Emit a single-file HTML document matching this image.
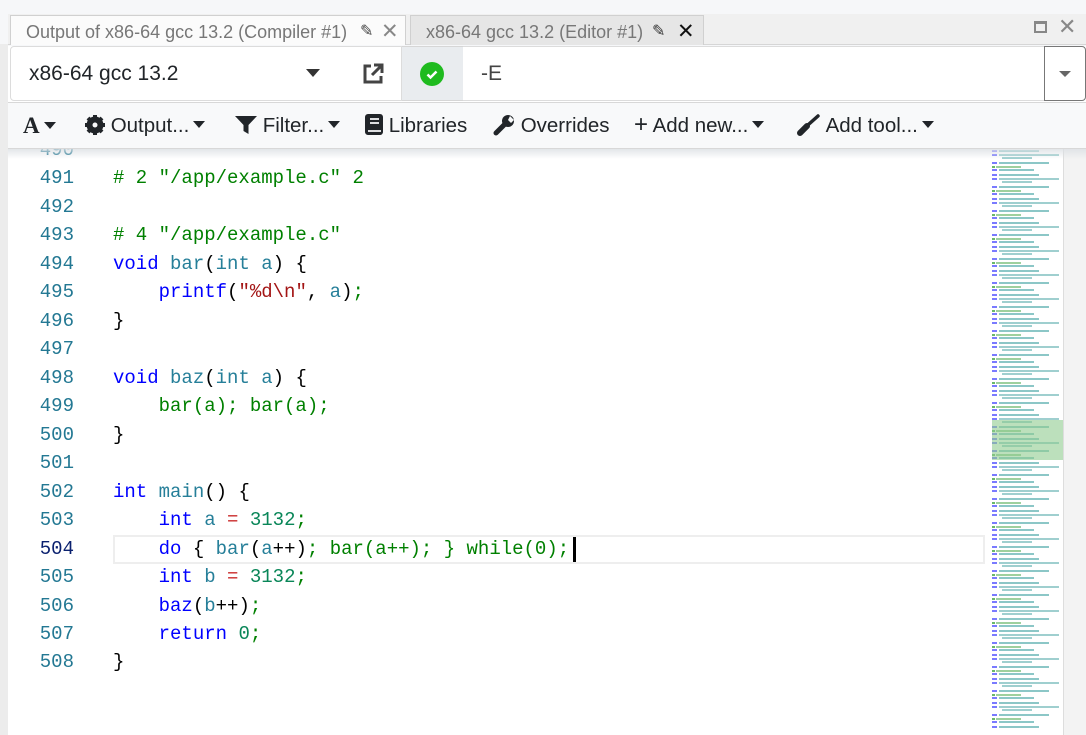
<!DOCTYPE html>
<html><head><meta charset="utf-8"><style>
*{margin:0;padding:0;box-sizing:border-box}
body{width:1086px;height:735px;overflow:hidden;background:#f6f7f9;font-family:"Liberation Sans",sans-serif;position:relative}
.abs{position:absolute}
.tabbar{left:8px;top:14px;width:1078px;height:31px;background:#f0f0f0;border-bottom:1px solid #d6d6d6}
.tab{top:15px;height:30px;font-size:18px;color:#777;white-space:nowrap}
.row{left:8px;top:46px;width:1078px;height:56px;background:#fff}
.tb{left:8px;top:102px;width:1078px;height:47px;background:#f8f9fa;border-top:1px solid #d8d8d8;border-bottom:1px solid #d8d8d8;z-index:2}
.tbi{top:114px;font-size:20.5px;color:#212529;white-space:nowrap;z-index:3}
.caret{display:inline-block;width:0;height:0;border-left:6px solid transparent;border-right:6px solid transparent;border-top:7px solid #212529;vertical-align:middle;margin-left:4px;margin-top:-4px}
.ed{left:8px;top:149px;width:1078px;height:586px;background:#fff}
.code{font-family:"Liberation Mono",monospace;font-size:19px;line-height:28.47px;white-space:pre}
.ln{left:28px;width:46px;text-align:right;color:#237893}
.k{color:#0000ff}.t{color:#267f99}.g{color:#008000}.n{color:#098658}.s{color:#a31515}.r{color:#c92a2a}.b{color:#000}
</style></head><body>
<div class="abs" style="left:0;top:44px;width:8px;height:691px;background:#ececec"></div>
<div class="abs tabbar"></div>
<div class="abs tab" style="left:10px;width:396px;background:#fbfbfb;border:1px solid #d0d0d0;border-bottom:none"></div>
<div class="abs" style="left:26px;top:22px;font-size:18px;color:#777;white-space:nowrap">Output of x86-64 gcc 13.2 (Compiler #1)</div>
<div class="abs" style="left:360px;top:21px;font-size:16px;color:#444">&#9998;</div>
<div class="abs" style="left:381px;top:19px;font-size:21px;color:#888">✕</div>
<div class="abs tab" style="left:410px;width:294px;background:#e6e6e6;border:1px solid #d0d0d0;border-bottom:none"></div>
<div class="abs" style="left:426px;top:22px;font-size:18px;color:#777;white-space:nowrap">x86-64 gcc 13.2 (Editor #1)</div>
<div class="abs" style="left:652px;top:21px;font-size:16px;color:#333">&#9998;</div>
<div class="abs" style="left:677px;top:19px;font-size:21px;color:#111">✕</div>
<div class="abs" style="left:1034px;top:21px;width:13px;height:12px;border:2px solid #888;border-top-width:3px"></div>
<div class="abs" style="left:1058px;top:14px;font-size:22px;color:#888">✕</div>

<div class="abs row"></div>
<div class="abs" style="left:10px;top:46px;width:392px;height:55px;border:1px solid #dcdcdc;border-radius:4px 0 0 4px;background:#fff"></div>
<div class="abs" style="left:29px;top:62px;font-size:21px;color:#212529">x86-64 gcc 13.2</div>
<div class="abs" style="left:306px;top:69px;border-left:7px solid transparent;border-right:7px solid transparent;border-top:8px solid #333"></div>
<svg class="abs" style="left:361px;top:62px" width="24" height="24" viewBox="0 0 24 24"><path d="M10 4H4v16h16v-6" fill="none" stroke="#444" stroke-width="3"/><path d="M13 3h8v8M21 3L11 13" fill="none" stroke="#444" stroke-width="3"/></svg>
<div class="abs" style="left:402px;top:46px;width:61px;height:55px;background:#e9ecef;border-top:1px solid #d6d6d6;border-bottom:1px solid #d6d6d6"></div>
<div class="abs" style="left:420px;top:62px;width:24px;height:24px;border-radius:50%;background:#1fbb1f"></div>
<svg class="abs" style="left:420px;top:62px" width="24" height="24"><path d="M7.5 12.5l3 3 6-6" fill="none" stroke="#fff" stroke-width="2.5"/></svg>
<div class="abs" style="left:463px;top:46px;width:581px;height:55px;border-top:1px solid #dcdcdc;border-bottom:1px solid #dcdcdc;background:#fff"></div>
<div class="abs" style="left:481px;top:62px;font-size:21px;color:#444">-E</div>
<div class="abs" style="left:1044px;top:46px;width:42px;height:55px;border:1px solid #777;border-radius:0 4px 4px 0;background:#fff"></div>
<div class="abs" style="left:1059px;top:71px;border-left:6px solid transparent;border-right:6px solid transparent;border-top:6px solid #666"></div>

<div class="abs ed"></div>
<div class="abs" style="left:113px;top:535px;width:872px;height:29px;border:2px solid #eee"></div>
<div class="abs" style="left:573px;top:537px;width:3px;height:25px;background:#000"></div>
<div class="abs code ln" style="top:136px">490
491
492
493
494
495
496
497
498
499
500
501
502
503
<span style="color:#0b216f">504</span>
505
506
507
508</div>
<div class="abs code" style="left:113px;top:136px">
<span class="g"># 2 "/app/example.c" 2</span>

<span class="g"># 4 "/app/example.c"</span>
<span class="k">void</span> <span class="t">bar</span><span class="b">(</span><span class="t">int a</span><span class="b">) {</span>
    <span class="k">printf</span><span class="b">(</span><span class="s">"%d\n"</span><span class="b">, </span><span class="t">a</span><span class="b">)</span><span class="g">;</span>
<span class="b">}</span>

<span class="k">void</span> <span class="t">baz</span><span class="b">(</span><span class="t">int a</span><span class="b">) {</span>
    <span class="g">bar(a); bar(a);</span>
<span class="b">}</span>

<span class="k">int</span> <span class="t">main</span><span class="b">() {</span>
    <span class="k">int</span> <span class="t">a</span> <span class="r">=</span> <span class="n">3132</span><span class="g">;</span>
    <span class="k">do</span> <span class="b">{</span> <span class="t">bar</span><span class="b">(</span><span class="t">a</span><span class="b">++)</span><span class="g">; bar(a++); } while(0);</span>
    <span class="k">int</span> <span class="t">b</span> <span class="r">=</span> <span class="n">3132</span><span class="g">;</span>
    <span class="k">baz</span><span class="b">(</span><span class="t">b</span><span class="b">++)</span><span class="g">;</span>
    <span class="k">return</span> <span class="n">0</span><span class="g">;</span>
<span class="b">}</span></div>

<div class="abs tb"></div>
<div class="abs" style="left:8px;top:149px;width:1078px;height:10px;background:linear-gradient(rgba(220,224,228,0.8),rgba(255,255,255,0));z-index:2"></div>
<div class="abs tbi" style="left:23px;font-family:'Liberation Serif',serif;font-weight:bold;font-size:23px;top:113px">A<span class="caret"></span></div>
<div class="abs tbi" style="left:85px"><svg width="20" height="20" viewBox="0 0 20 20" style="vertical-align:-3px"><circle cx="10" cy="10" r="6.5" fill="none" stroke="#212529" stroke-width="4"/><g stroke="#212529" stroke-width="4"><path d="M10 0v20M0 10h20M3 3l14 14M17 3L3 17"/></g><circle cx="10" cy="10" r="2.5" fill="#f8f9fa"/></svg> Output...<span class="caret"></span></div>
<div class="abs tbi" style="left:235px"><svg width="22" height="20" viewBox="0 0 22 20" style="vertical-align:-3px"><path d="M0 1h22l-8.5 9v9l-5-3v-6z" fill="#212529"/></svg> Filter...<span class="caret"></span></div>
<div class="abs tbi" style="left:365px"><svg width="18" height="21" viewBox="0 0 18 21" style="vertical-align:-3px"><rect x="0" y="0" width="18" height="21" rx="3" fill="#212529"/><path d="M5 5h9M5 9h9M3 17h13" stroke="#f8f9fa" stroke-width="1.8"/></svg> Libraries</div>
<div class="abs tbi" style="left:493px"><svg width="22" height="22" viewBox="0 0 22 22" style="vertical-align:-4px"><path d="M3 19L12 10" stroke="#212529" stroke-width="5" stroke-linecap="round"/><circle cx="15" cy="7" r="6" fill="#212529"/><path d="M17 2l4 4-3 3-3-3z" fill="#f8f9fa"/></svg> Overrides</div>
<div class="abs tbi" style="left:634px"><span style="font-size:24px;line-height:20px">+</span> Add new...<span class="caret"></span></div>
<div class="abs tbi" style="left:797px"><svg width="24" height="22" viewBox="0 0 24 22" style="vertical-align:-4px"><path d="M3 19L10 12" stroke="#212529" stroke-width="6" stroke-linecap="round"/><path d="M12 10L21 2" stroke="#212529" stroke-width="3.5" stroke-linecap="round"/></svg> Add tool...<span class="caret"></span></div>

<div class="abs" style="left:1063px;top:149px;width:23px;height:586px;background:#f3f3f3;border-left:1px solid #ddd"></div>
<svg class="abs" style="left:992px;top:150px" width="71" height="585">
<defs><pattern id="mm" width="71" height="24" patternUnits="userSpaceOnUse">
<rect x="0" y="0" width="5" height="2" fill="#7a7aff"/><rect x="7" y="0" width="40" height="2" fill="#8cc7c7"/>
<rect x="0" y="4" width="5" height="2" fill="#7a7aff"/><rect x="7" y="4" width="60" height="2" fill="#9fcfcf"/>
<rect x="10" y="7" width="30" height="2" fill="#9fcfcf"/>
<rect x="0" y="12" width="5" height="2" fill="#7a7aff"/><rect x="7" y="12" width="50" height="2" fill="#8cc7c7"/>
<rect x="0" y="16" width="3" height="2" fill="#6ab86a"/><rect x="4" y="16" width="25" height="2" fill="#9ed09e"/>
<rect x="0" y="19" width="5" height="2" fill="#7a7aff"/><rect x="7" y="19" width="35" height="2" fill="#8cc7c7"/>
</pattern></defs>
<rect x="0" y="0" width="71" height="580" fill="url(#mm)"/>
<rect x="0" y="270" width="71" height="40" fill="#8fcc8f" opacity="0.6"/>
</svg>
</body></html>
